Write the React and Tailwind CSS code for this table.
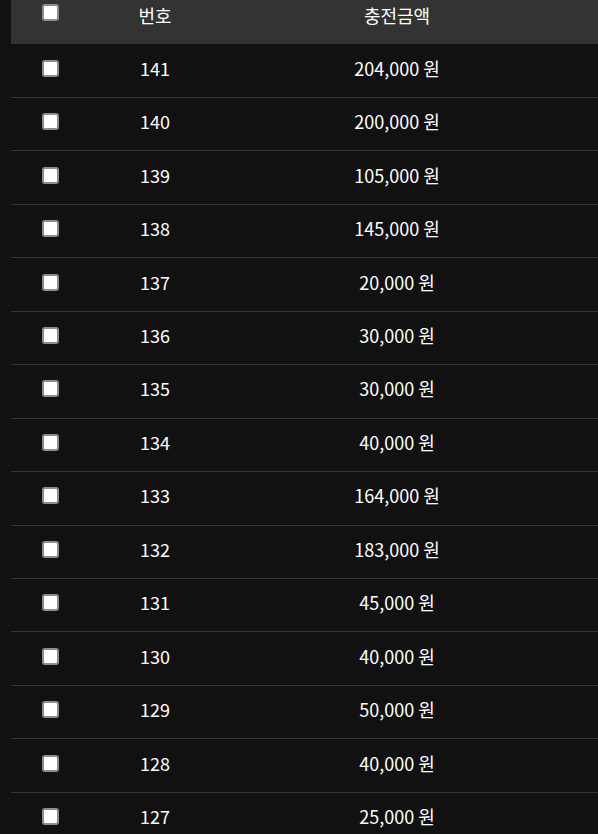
import React from "react";

const rows = [
  [141, "204,000"],
  [140, "200,000"],
  [139, "105,000"],
  [138, "145,000"],
  [137, "20,000"],
  [136, "30,000"],
  [135, "30,000"],
  [134, "40,000"],
  [133, "164,000"],
  [132, "183,000"],
  [131, "45,000"],
  [130, "40,000"],
  [129, "50,000"],
  [128, "40,000"],
  [127, "25,000"],
];

function Box() {
  return (
    <div className="w-[17px] h-[17px] bg-white border-2 border-[#8d8d8d] rounded-[3px]" />
  );
}

export default function App() {
  return (
    <div
      className="w-[598px] h-[834px] overflow-hidden bg-[#111111] pl-[11px] text-white"
      style={{ fontFamily: '"Noto Sans CJK KR", "Noto Sans", sans-serif' }}
    >
      <div className="grid grid-cols-[78px_132px_352px_1fr] h-[44px] mb-[0.5px] bg-[#333333] text-[18px]">
        <div className="flex justify-center pt-[4px]">
          <Box />
        </div>
        <div className="flex justify-center pt-[1px] leading-[28px]">번호</div>
        <div className="flex justify-center pt-[1px] leading-[28px]">충전금액</div>
        <div />
      </div>
      {rows.map(([n, amt]) => (
        <div
          key={n}
          className="grid grid-cols-[78px_132px_352px_1fr] h-[53.46px] border-b border-[#333333] items-center pb-[5px] text-[18px]"
        >
          <div className="flex justify-center">
            <Box />
          </div>
          <div className="flex justify-center">{n}</div>
          <div className="flex justify-center">{amt} 원</div>
          <div />
        </div>
      ))}
    </div>
  );
}
